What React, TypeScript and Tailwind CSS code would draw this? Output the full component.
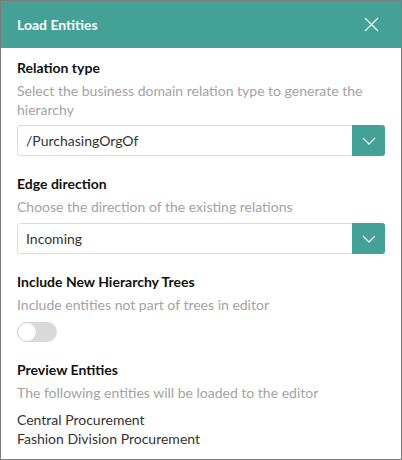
import { useState } from "react";

function Chevron() {
  return (
    <svg width="14" height="8" viewBox="0 0 14 8" fill="none">
      <path d="M1 1l6 6 6-6" stroke="#e6f4f2" strokeWidth="1.3" />
    </svg>
  );
}

function Select({ value }: { value: string }) {
  return (
    <div className="flex h-[31px] w-full rounded-[3px] border border-[#dcdcdc] bg-white">
      <div className="flex flex-1 items-center pl-[8px] text-[14px] text-[#333]">{value}</div>
      <div className="flex w-[33px] -my-px -mr-px items-center justify-center rounded-r-[3px] bg-[#43a197]">
        <Chevron />
      </div>
    </div>
  );
}

function Section({ title, desc, children }: { title: string; desc: string; children?: React.ReactNode }) {
  return (
    <div>
      <h2 className="text-[14px] font-bold leading-[20px] text-[#111]">{title}</h2>
      <p className="mt-[3px] text-[14px] leading-[19px] text-[#a3a3a3]">{desc}</p>
      {children}
    </div>
  );
}

export default function App() {
  const [on, setOn] = useState(false);

  return (
    <div
      className="flex h-[460px] w-[402px] flex-col border border-[#7a7a7a] bg-white"
      style={{ fontFamily: '"Segoe UI", Lato, "Noto Sans", sans-serif' }}
    >
      {/* Header */}
      <div className="flex h-[47px] shrink-0 items-center justify-between bg-[#43a197] pl-[16px] pr-[22px]">
        <h1 className="text-[14px] font-bold text-white">Load Entities</h1>
        <svg width="15" height="15" viewBox="0 0 15 15" fill="none">
          <path d="M1 1l13 13M14 1L1 14" stroke="#d4eeea" strokeWidth="1.5" />
        </svg>
      </div>

      {/* Body */}
      <div className="flex flex-col px-[16px] pt-[10px]">
        <Section title="Relation type" desc="Select the business domain relation type to generate the hierarchy">
          <div className="mt-[6px]">
            <Select value="/PurchasingOrgOf" />
          </div>
        </Section>

        <div className="mt-[18px]">
          <Section title="Edge direction" desc="Choose the direction of the existing relations">
            <div className="mt-[7px]">
              <Select value="Incoming" />
            </div>
          </Section>
        </div>

        <div className="mt-[18px]">
          <Section title="Include New Hierarchy Trees" desc="Include entities not part of trees in editor">
            <button
              onClick={() => setOn(!on)}
              className={`mt-[8px] flex h-[20px] w-[40px] items-center rounded-full ${on ? "bg-[#43a197]" : "bg-[#d9d9d9]"}`}
            >
              <span
                className={`h-[20px] w-[20px] rounded-full border border-[#d0d0d0] bg-white ${on ? "ml-[20px]" : ""}`}
              />
            </button>
          </Section>
        </div>

        <div className="mt-[18px]">
          <Section title="Preview Entities" desc="The following entities will be loaded to the editor">
            <ul className="mt-[8px] text-[14px] leading-[19px] text-[#333]">
              <li>Central Procurement</li>
              <li>Fashion Division Procurement</li>
            </ul>
          </Section>
        </div>
      </div>
    </div>
  );
}
